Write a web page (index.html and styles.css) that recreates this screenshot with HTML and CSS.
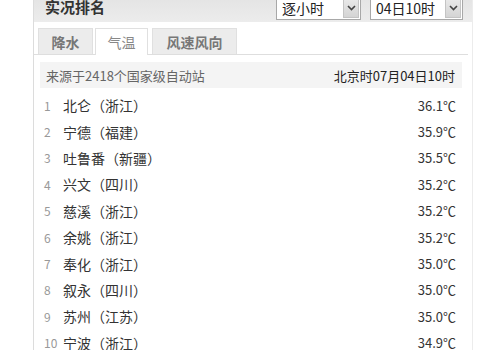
FILE: index.html
```html
<!DOCTYPE html>
<html lang="zh">
<head>
<meta charset="utf-8">
<link rel="stylesheet" href="styles.css">
</head>
<body>
<div class="panel">
  <div class="head">
    <h2 class="title">实况排名</h2>
    <div class="controls">
      <div class="sel sel-a"><span class="sel-text">逐小时</span><span class="sel-btn"><svg width="9" height="6" viewBox="0 0 9 6"><path d="M1 1 L4.5 4.5 L8 1" fill="none" stroke="#444" stroke-width="1.6"/></svg></span></div>
      <div class="sel sel-b"><span class="sel-text">04日10时</span><span class="sel-btn"><svg width="9" height="6" viewBox="0 0 9 6"><path d="M1 1 L4.5 4.5 L8 1" fill="none" stroke="#444" stroke-width="1.6"/></svg></span></div>
    </div>
  </div>
  <div class="tabs">
    <span class="tab tab-rain">降水</span>
    <span class="tab tab-temp active">气温</span>
    <span class="tab tab-wind">风速风向</span>
  </div>
  <div class="body">
    <div class="source">
      <span class="src-l">来源于2418个国家级自动站</span>
      <span class="src-r">北京时07月04日10时</span>
    </div>
    <ol class="list">
      <li class="row"><span class="num">1</span><span class="name">北仑（浙江）</span><span class="val">36.1℃</span></li>
      <li class="row"><span class="num">2</span><span class="name">宁德（福建）</span><span class="val">35.9℃</span></li>
      <li class="row"><span class="num">3</span><span class="name">吐鲁番（新疆）</span><span class="val">35.5℃</span></li>
      <li class="row"><span class="num">4</span><span class="name">兴文（四川）</span><span class="val">35.2℃</span></li>
      <li class="row"><span class="num">5</span><span class="name">慈溪（浙江）</span><span class="val">35.2℃</span></li>
      <li class="row"><span class="num">6</span><span class="name">余姚（浙江）</span><span class="val">35.2℃</span></li>
      <li class="row"><span class="num">7</span><span class="name">奉化（浙江）</span><span class="val">35.0℃</span></li>
      <li class="row"><span class="num">8</span><span class="name">叙永（四川）</span><span class="val">35.0℃</span></li>
      <li class="row"><span class="num">9</span><span class="name">苏州（江苏）</span><span class="val">35.0℃</span></li>
      <li class="row"><span class="num">10</span><span class="name">宁波（浙江）</span><span class="val">34.9℃</span></li>
    </ol>
  </div>
</div>
</body>
</html>
```

FILE: styles.css
```css
html, body {
  margin: 0;
  padding: 0;
  background: #fff;
}
body {
  font-family: "Noto Sans CJK SC", "Liberation Sans", sans-serif;
  font-size: 13px;
  color: #333;
  overflow: hidden;
}
.panel {
  margin-left: 33px;
  width: 438px;
  height: 360px;
  border-left: 1px solid #dcdcdc;
  border-right: 1px solid #ececec;
}
.head {
  margin-top: -8px;
  height: 30px;
  background: linear-gradient(#e2e2e2, #ececec);
  display: flex;
  align-items: center;
  justify-content: space-between;
  padding: 0 9px 0 11px;
}
.title {
  margin: 0;
  font-size: 15px;
  font-weight: bold;
  color: #333;
  line-height: 1;
  margin-top: -1px;
}
.controls {
  display: flex;
  gap: 9px;
  margin-top: 2px;
}
.sel {
  height: 22px;
  border: 1px solid #a8a8a8;
  background: #fff;
  display: flex;
  align-items: center;
  justify-content: space-between;
  padding: 0 1px 0 5px;
  font-size: 14px;
  color: #222;
}
.sel-a { width: 77px; }
.sel-b { width: 85px; }
.sel-btn {
  width: 16px;
  height: 19px;
  background: linear-gradient(#e8e8e8, #d4d4d4);
  border: 1px solid #c4c4c4;
  box-sizing: border-box;
  display: flex;
  align-items: center;
  justify-content: center;
}
.tabs {
  display: flex;
  align-items: flex-end;
  padding: 5px 0 0 4px;
  height: 27px;
  border-bottom: 1px solid #dedede;
  margin-right: 4px;
  gap: 2px;
}
.tab {
  height: 26px;
  box-sizing: border-box;
  display: flex;
  align-items: center;
  justify-content: center;
  border: 1px solid #e0e0e0;
  border-bottom: none;
  background: #ececec;
  color: #777;
  font-size: 14px;
  font-weight: bold;
}
.tab-rain { width: 55px; }
.tab-temp { width: 53px; }
.tab-wind { width: 85px; margin-left: 2px; }
.tab.active {
  background: #fff;
  color: #888;
  font-weight: normal;
  height: 27px;
  margin-bottom: -1px;
}
.body {
  padding: 7px 10px 0 6px;
}
.source {
  height: 26px;
  background: #f4f4f4;
  display: flex;
  align-items: center;
  justify-content: space-between;
  padding: 0 7px 0 6px;
  font-size: 13px;
}
.src-l { color: #666; }
.src-r { color: #222; }
.list {
  list-style: none;
  margin: 4px 0 0;
  padding: 0;
}
.row {
  height: 26.4px;
  display: flex;
  align-items: center;
  padding: 0 6px 0 2px;
}
.num {
  width: 19px;
  flex: none;
  color: #999;
  font-size: 12px;
  padding-left: 2px;
}
.name {
  flex: 1;
  color: #333;
  font-size: 14px;
}
.val {
  color: #333;
  font-size: 13px;
}
```
